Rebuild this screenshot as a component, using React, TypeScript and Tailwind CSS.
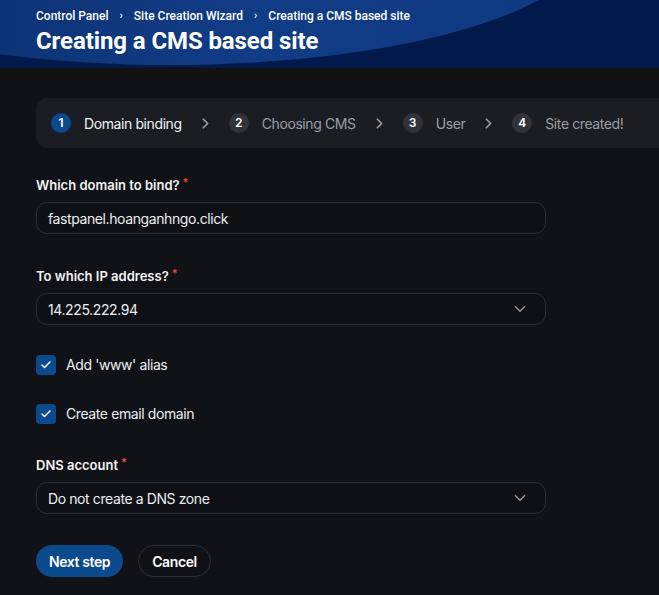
import { Check, ChevronDown, ChevronRight } from "lucide-react";

const steps = [
  { n: 1, label: "Domain binding", active: true },
  { n: 2, label: "Choosing CMS" },
  { n: 3, label: "User" },
  { n: 4, label: "Site created!" },
];

function Label({ children }: { children: React.ReactNode }) {
  return (
    <div className="flex items-start text-[13px] font-semibold text-[#f1f2f4] leading-4">
      {children}
      <span className="ml-[3px] -mt-[3px] text-[11px] text-[#e5484d]">*</span>
    </div>
  );
}

function Field({ children, select }: { children: React.ReactNode; select?: boolean }) {
  return (
    <div className="mt-[9px] flex h-[32px] w-[510px] items-center justify-between rounded-[11px] border border-[#2d2f36] bg-[#0f1015] pl-[11px] pr-[16px] text-[14px] tracking-[-0.4px] text-[#eceef2]">
      <span>{children}</span>
      {select && <ChevronDown className="h-[18px] w-[18px] text-[#8d9099]" strokeWidth={2.2} />}
    </div>
  );
}

function CheckRow({ label }: { label: string }) {
  return (
    <div className="flex items-center gap-[10px]">
      <div className="flex h-[20px] w-[20px] items-center justify-center rounded-[4px] bg-[#0c4a8e]">
        <Check className="h-[12px] w-[12px] text-white" strokeWidth={3} />
      </div>
      <span className="text-[14px] leading-5 tracking-[-0.4px] text-[#eceef2]">{label}</span>
    </div>
  );
}

export default function App() {
  return (
    <div className="min-h-[595px] w-[659px] overflow-hidden bg-[#111217] font-['Inter',sans-serif]">
      {/* Header */}
      <header className="relative h-[68px] overflow-hidden bg-[#011a4b] font-['Roboto',sans-serif]">
        <svg className="absolute inset-0" width="659" height="68" viewBox="0 0 659 68">
          <defs>
            <linearGradient id="hg" x1="0" y1="0" x2="1" y2="0">
              <stop offset="0" stopColor="#0a2c68" />
              <stop offset="0.6" stopColor="#113c86" />
              <stop offset="1" stopColor="#0f3a82" />
            </linearGradient>
          </defs>
          <ellipse cx="170" cy="-60" rx="420" ry="125" fill="url(#hg)" />
        </svg>
        <div className="relative px-[36px] pt-[7px]">
          <nav className="flex items-center text-[12px] font-medium text-white">
            <span>Control Panel</span>
            <span className="mx-[11px] text-[11px]">›</span>
            <span>Site Creation Wizard</span>
            <span className="mx-[11px] text-[11px]">›</span>
            <span>Creating a CMS based site</span>
          </nav>
          <h1 className="mt-[2px] text-[24px] font-bold leading-7 tracking-[-0.1px] text-white">
            Creating a CMS based site
          </h1>
        </div>
      </header>

      <div className="h-[12px] bg-[#121212]" />

      <main className="pl-[36px]">
        {/* Steps */}
        <div className="mt-[18px] flex h-[50px] items-center rounded-l-[12px] bg-[#1b1d23] pl-[15px]">
          {steps.map((s, i) => (
            <div key={s.n} className="flex items-center">
              <div
                className={`flex h-[20px] w-[20px] items-center justify-center rounded-full text-[12px] font-semibold text-white ${
                  s.active ? "bg-[#0c4a8e]" : "bg-[#30333b]"
                }`}
              >
                {s.n}
              </div>
              <span
                className={`ml-[13px] text-[14px] tracking-[-0.4px] ${
                  s.active ? "text-[#f1f2f4]" : "text-[#9b9ea6]"
                }`}
              >
                {s.label}
              </span>
              {i < steps.length - 1 && (
                <ChevronRight className="mx-[15px] h-[17px] w-[17px] text-[#9b9ea6]" strokeWidth={2.4} />
              )}
            </div>
          ))}
        </div>

        {/* Form */}
        <div className="mt-[29px]">
          <Label>Which domain to bind?</Label>
          <Field>fastpanel.hoanganhngo.click</Field>
        </div>

        <div className="mt-[34px]">
          <Label>To which IP address?</Label>
          <Field select>14.225.222.94</Field>
        </div>

        <div className="mt-[30px] flex flex-col gap-[29px]">
          <CheckRow label="Add 'www' alias" />
          <CheckRow label="Create email domain" />
        </div>

        <div className="mt-[33px]">
          <Label>DNS account</Label>
          <Field select>Do not create a DNS zone</Field>
        </div>

        <div className="mt-[31px] flex items-center gap-[15px]">
          <button className="h-[32px] rounded-full bg-[#0c4a8e] px-[13px] text-[14px] font-semibold tracking-[-0.4px] text-white">
            Next step
          </button>
          <button className="h-[32px] rounded-full border border-[#2d2f36] px-[13px] text-[14px] font-semibold tracking-[-0.4px] text-white">
            Cancel
          </button>
        </div>
      </main>
    </div>
  );
}
